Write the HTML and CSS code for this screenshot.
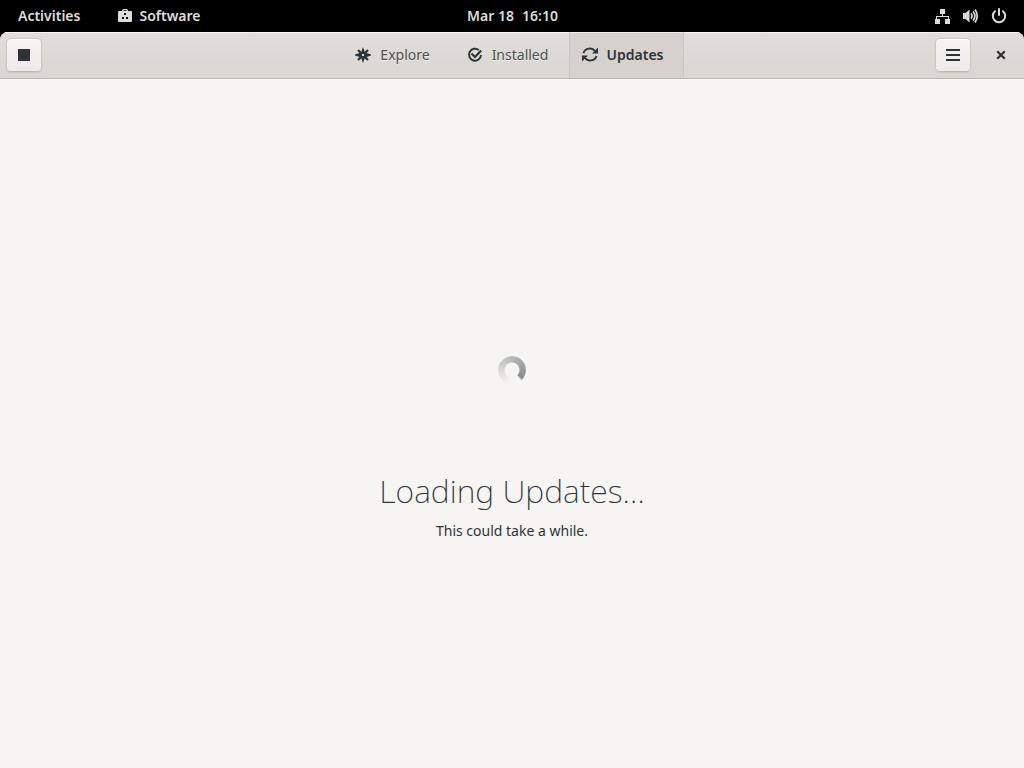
FILE: index.html
```html
<!DOCTYPE html>
<html lang="en">
<head>
<meta charset="utf-8">
<meta name="viewport" content="width=device-width, initial-scale=1">
<title>Software</title>
<link rel="stylesheet" href="styles.css">
</head>
<body>
<header class="panel">
  <div class="panel-left">
    <button class="panel-item">Activities</button>
    <button class="panel-item app-menu">
      <svg class="icon" viewBox="0 0 16 16" aria-hidden="true"><path fill="currentColor" fill-rule="evenodd" d="M5 3V2.500Q5 1 6.500 1h3Q11 1 11 2.500V3h3q1 0 1 1v9q0 1-1 1H2q-1 0-1-1V4q0-1 1-1zM6.500 3h3v-.8h-3zM7 5v2h2V5zM5 9v2h2V9zM9 9v2h2V9z"/></svg>
      <span>Software</span>
    </button>
  </div>
  <button class="panel-item clock"><span>Mar 18</span><span>16:10</span></button>
  <button class="panel-item status" aria-label="System menu">
    <svg class="icon" viewBox="0 0 16 16" aria-hidden="true"><path fill="currentColor" d="M5 1h5v5H8v2h6v3h1v5h-5v-5h3V9H2v2h3v5H0v-5h1V8h6V6H5z"/></svg>
    <svg class="icon" viewBox="0 0 16 16" aria-hidden="true"><path fill="currentColor" d="M0 5h2.500L6.500 1.500v13L2.500 11H0z"/><path d="M8 5.500q2 2.500 0 5M10 3.500q3.800 4.500 0 9M12 1.500q4.500 6.500 0 13" fill="none" stroke="currentColor" stroke-width="1.700"/></svg>
    <svg class="icon" viewBox="0 0 16 16" aria-hidden="true"><path d="M4 3.200a6.200 6.200 0 1 0 8 0M8 1v6" fill="none" stroke="currentColor" stroke-width="2" stroke-linecap="round"/></svg>
  </button>
</header>
<div class="window">
  <div class="headerbar">
    <button class="tool" aria-label="Stop"><svg class="icon" viewBox="0 0 16 16" aria-hidden="true"><path fill="currentColor" d="M2 2h12v12H2z"/></svg></button>
    <nav class="tabs">
      <button class="tab">
        <svg class="icon" viewBox="0 0 16 16" aria-hidden="true"><path fill="currentColor" fill-rule="evenodd" d="M8 0l2 5.500L16 7.500v1L10 10.500 8 16 6 10.500 0 8.500v-1L6 5.500zM7 7v2h2V7z"/><path d="M3 3l10 10M13 3L3 13" fill="none" stroke="currentColor" stroke-width="2.200" stroke-dasharray="4.500 5.200 4.500"/></svg>
        <span>Explore</span>
      </button>
      <button class="tab">
        <svg class="icon" viewBox="0 0 16 16" aria-hidden="true"><path d="M11.800 3A6 6 0 1 0 14 8" fill="none" stroke="currentColor" stroke-width="2"/><path d="M4.500 6.500L8 10l6.200-6.500" fill="none" stroke="currentColor" stroke-width="2.200"/></svg>
        <span>Installed</span>
      </button>
      <button class="tab active" aria-current="page">
        <svg class="icon" viewBox="0 0 16 16" aria-hidden="true"><path d="M1.500 6C3 1 10 0 13 4M14.500 9C13 14 6 15 3 11" fill="none" stroke="currentColor" stroke-width="2"/><path fill="currentColor" d="M16 .5v6h-6zM0 14.500v-6h6z"/></svg>
        <span>Updates</span>
      </button>
    </nav>
    <div class="header-end">
      <button class="tool" aria-label="Menu"><svg class="icon" viewBox="0 0 16 16" aria-hidden="true"><path fill="currentColor" d="M1 2h14v2H1zM1 7h14v2H1zM1 12h14v2H1z"/></svg></button>
      <button class="close" aria-label="Close"><svg class="icon" viewBox="0 0 16 16" aria-hidden="true"><path d="M4.200 4.200l7.600 7.600M11.800 4.200l-7.600 7.600" stroke="currentColor" stroke-width="2.200"/></svg></button>
    </div>
  </div>
  <main class="content">
    <div class="spinner-box">
      <div class="spinner" role="progressbar" aria-label="Loading"></div>
    </div>
    <h1 class="title">Loading Updates…</h1>
    <p class="subtitle">This could take a while.</p>
  </main>
</div>
</body>
</html>
```
FILE: styles.css
```css
* {
  box-sizing: border-box;
}

body {
  margin: 0;
  min-height: 100vh;
  display: flex;
  flex-direction: column;
  background: #000;
  color: #2e3436;
  font: 14px/20px "Noto Sans", "Open Sans", sans-serif;
}

button {
  margin: 0;
  padding: 0;
  border: 0;
  background: none;
  color: inherit;
  font: inherit;
}

.icon {
  display: block;
  flex: none;
  width: 16px;
  height: 16px;
}

.panel {
  display: grid;
  grid-template-columns: 1fr auto 1fr;
  align-items: center;
  height: 32px;
  padding: 0 17px 0 18px;
  color: #dcdcdc;
  font-weight: 600;
}

.panel-left {
  display: flex;
  gap: 37px;
}

.panel-item {
  display: flex;
  align-items: center;
}

.app-menu {
  gap: 6px;
}

.clock {
  gap: 8px;
}

.status {
  justify-self: end;
  gap: 12px;
}

.window {
  flex: 1;
  display: flex;
  flex-direction: column;
  overflow: hidden;
  border-radius: 8px 8px 0 0;
  background: #f6f5f4;
}

.headerbar {
  display: grid;
  grid-template-columns: 1fr auto 1fr;
  align-items: center;
  height: 47px;
  padding: 0 7px 0 6px;
  border-bottom: 1px solid #bfb8b1;
  background: linear-gradient(to top, #dad6d2, #e1dedb);
  box-shadow: inset 0 1px #f9f8f8;
}

.tool {
  display: grid;
  place-items: center;
  width: 36px;
  height: 34px;
  border: 1px solid #cdc7c2;
  border-bottom-color: #bfb8b1;
  border-radius: 5px;
  background: linear-gradient(to top, #edebe9, #f6f5f4);
  box-shadow: inset 0 1px #fff, 0 1px 2px rgba(0, 0, 0, 0.07);
}

.tabs {
  display: grid;
  grid-template-columns: repeat(3, 115px);
  align-self: stretch;
}

.tab {
  display: flex;
  align-items: center;
  justify-content: center;
  gap: 9px;
  padding-right: 8px;
  border: 1px solid transparent;
  border-width: 0 1px;
  color: #4b5052;
  text-shadow: 0 1px rgba(255, 255, 255, 0.6);
}

.tab .icon {
  color: #2e3436;
}

.tab.active {
  border-color: #cbc5c0;
  background: #d6d1cd;
  box-shadow: inset 0 1px #f0eeed;
  color: #2e3436;
  font-weight: 600;
  text-shadow: none;
}

.header-end {
  display: flex;
  justify-content: flex-end;
  gap: 18px;
  align-items: center;
  padding-right: 4px;
}

.close {
  display: grid;
  place-items: center;
  width: 24px;
  height: 24px;
}

.content {
  flex: 1;
  display: flex;
  flex-direction: column;
  align-items: center;
  justify-content: center;
  text-align: center;
}

.spinner-box {
  display: grid;
  place-items: center;
  width: 128px;
  height: 128px;
}

.spinner {
  width: 28px;
  height: 28px;
  border-radius: 50%;
  background: conic-gradient(from 190deg, rgba(46, 52, 54, 0), rgba(46, 52, 54, 0.55) 300deg, transparent 310deg);
  mask: radial-gradient(circle, transparent 7px, #000 8px);
}

.title {
  margin: 35px 0 8px;
  font: 200 32px/44px "Noto Sans", "Open Sans", sans-serif;
}

.subtitle {
  margin: 0;
}
```
